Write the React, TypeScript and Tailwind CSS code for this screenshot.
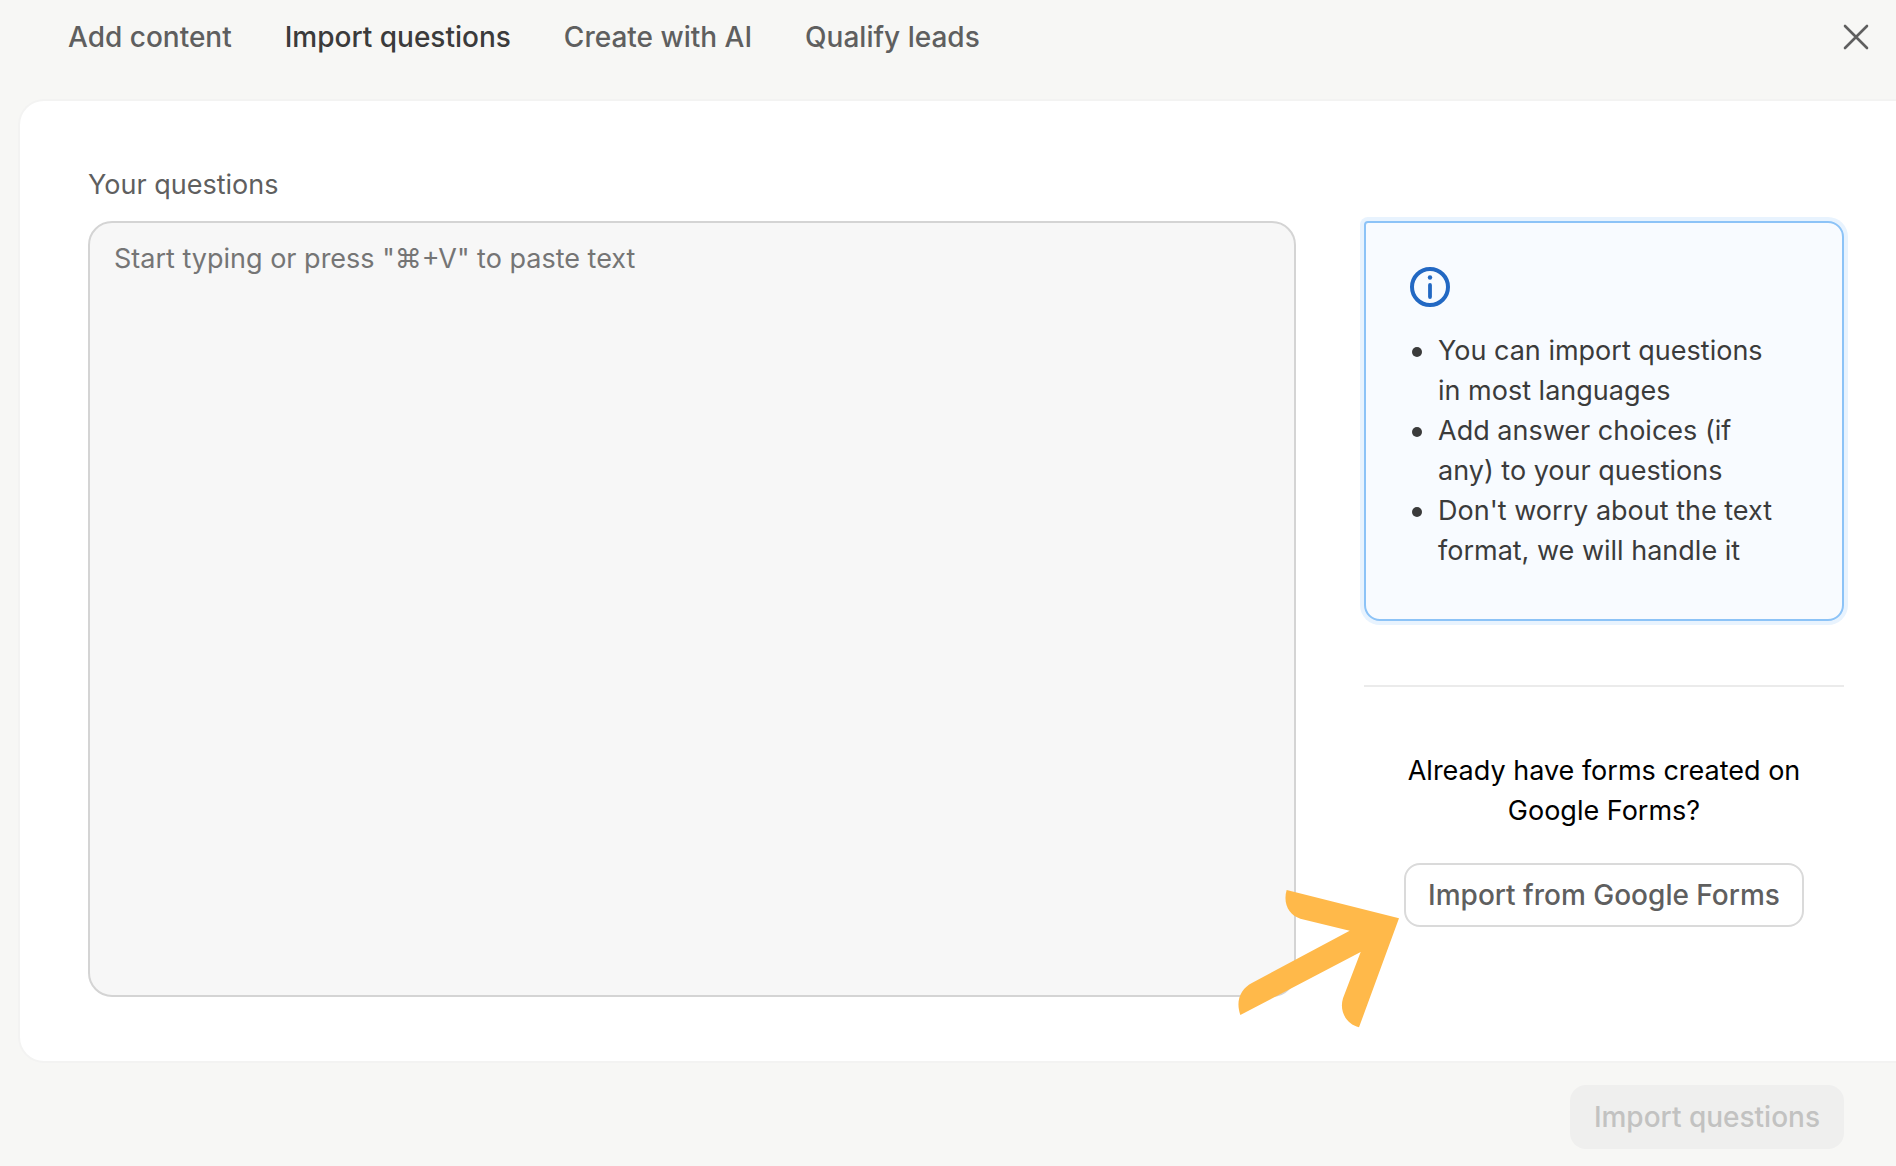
const tabs = [
  { label: "Add content", active: false },
  { label: "Import questions", active: true },
  { label: "Create with AI", active: false },
  { label: "Qualify leads", active: false },
];

const tips = [
  "You can import questions in most languages",
  "Add answer choices (if any) to your questions",
  "Don't worry about the text format, we will handle it",
];

function CloseIcon() {
  return (
    <svg viewBox="0 0 28 28" className="size-7" fill="none" stroke="currentColor" strokeWidth="2.6" strokeLinecap="round" aria-hidden="true">
      <path d="M3 3l22 22M25 3L3 25" />
    </svg>
  );
}

function InfoIcon() {
  return (
    <svg viewBox="0 0 48 48" className="size-12 text-[#2268c3]" fill="none" aria-hidden="true">
      <circle cx="24" cy="24" r="18" stroke="currentColor" strokeWidth="4" />
      <circle cx="24" cy="14.5" r="2.2" fill="currentColor" />
      <path d="M24 22v12" stroke="currentColor" strokeWidth="3.8" strokeLinecap="round" />
    </svg>
  );
}

function PointerArrow() {
  return (
    <svg
      viewBox="112 147 489 417"
      className="pointer-events-none absolute top-[26px] right-[calc(100%+4px)] h-[139px] w-[163px]"
      aria-hidden="true"
    >
      <path
        fill="#ffb94a"
        d="M261 150L598 235L478 562C440 552 418 515 430 475L483 336L122 525C107 482 123 446 158 428L450 272L302 236C268 226 249 191 261 150Z"
      />
    </svg>
  );
}

export default function App() {
  return (
    <div className="flex min-h-screen flex-col bg-[#f7f7f5] font-[Inter,'DejaVu_Sans',sans-serif] text-[27px] leading-10 text-[#5f5f5f]">
      <header className="flex items-start justify-between pt-[17px] pr-[26px] pb-11 pl-[68px]">
        <nav className="flex gap-[53px] text-[28px] leading-10 font-medium" aria-label="Import options">
          {tabs.map((tab) => (
            <button
              key={tab.label}
              type="button"
              aria-current={tab.active ? "page" : undefined}
              className={tab.active ? "text-[#3b3b3b]" : "text-[#5f5f5f]"}
            >
              {tab.label}
            </button>
          ))}
        </nav>
        <button type="button" aria-label="Close" className="flex h-10 items-center">
          <CloseIcon />
        </button>
      </header>

      <main className="ml-5 flex flex-1 gap-[68px] rounded-l-3xl bg-white py-16 pr-[52px] pl-[68px] shadow-[0_0_0_2px_#f3f3f2]">
        <div className="flex min-w-0 flex-1 flex-col gap-4">
          <label htmlFor="questions">Your questions</label>
          <textarea
            id="questions"
            placeholder={'Start typing or press "⌘+V" to paste text'}
            className="min-h-80 flex-1 resize-none rounded-3xl border-2 border-[#d4d4d4] bg-[#f7f7f7] px-6 py-4 outline-none placeholder:text-[#757575]"
          />
        </div>

        <aside className="w-[480px] shrink-0 pt-14">
          <section className="rounded-2xl rounded-tl-sm border-2 border-[#8cc3f7] bg-[#f8fbff] pt-10 pr-14 pb-12 pl-10 text-[#3b3b3b] shadow-[0_0_0_4px_#e8f3fe]">
            <InfoIcon />
            <ul className="mt-5">
              {tips.map((tip) => (
                <li key={tip} className="flex gap-4">
                  <span className="mt-4 ml-1.5 size-2.5 shrink-0 rounded-full bg-[#3b3b3b]" />
                  <span>{tip}</span>
                </li>
              ))}
            </ul>
          </section>

          <hr className="mt-16 border-t-2 border-[#ebebeb]" />

          <div className="mt-16 flex flex-col items-center gap-8 px-8 text-center text-black">
            <p>Already have forms created on Google Forms?</p>
            <div className="relative">
              <button
                type="button"
                className="h-16 rounded-2xl border-2 border-[#dadada] bg-white px-[22px] text-[28px] font-medium whitespace-nowrap text-[#5f5f5f]"
              >
                Import from Google Forms
              </button>
              <PointerArrow />
            </div>
          </div>
        </aside>
      </main>

      <footer className="flex justify-end pt-6 pr-[52px] pb-[17px]">
        <button type="button" disabled className="h-16 rounded-2xl bg-[#efefee] px-6 text-[28px] font-medium text-[#c2c2c1]">
          Import questions
        </button>
      </footer>
    </div>
  );
}
